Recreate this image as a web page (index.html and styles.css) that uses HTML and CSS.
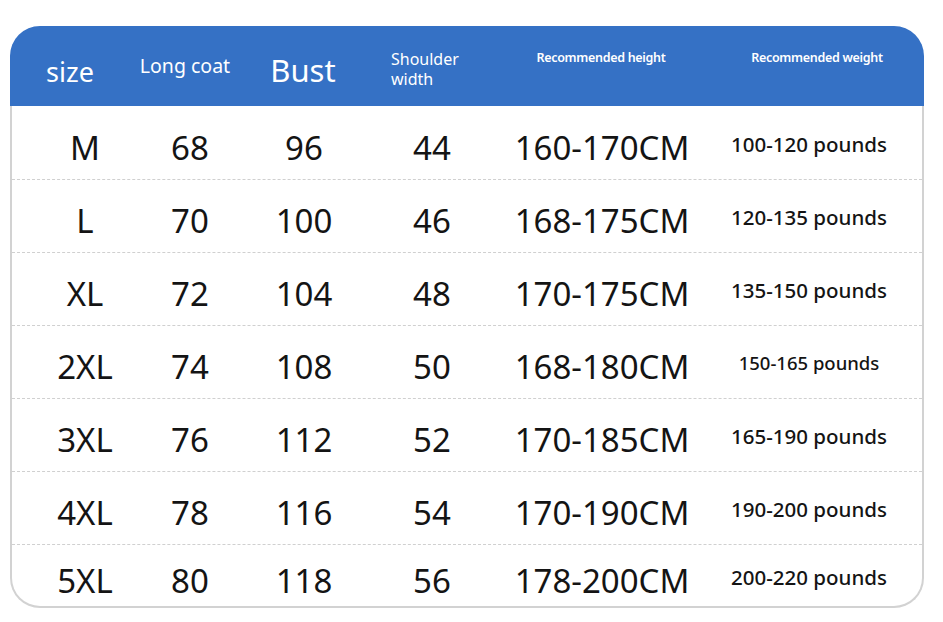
FILE: index.html
```html
<!DOCTYPE html>
<html>
<head>
<meta charset="utf-8">
<link rel="stylesheet" href="styles.css">
</head>
<body>
<div class="card">
  <div class="head">
    <div class="h h-size">size</div>
    <div class="h h-coat">Long coat</div>
    <div class="h h-bust">Bust</div>
    <div class="h h-shoulder">Shoulder<br>width</div>
    <div class="h h-rec">Recommended height</div>
    <div class="h h-rec">Recommended weight</div>
  </div>
  <div class="body">
    <div class="row first"><div class="c big">M</div><div class="c big">68</div><div class="c big">96</div><div class="c big">44</div><div class="c big">160-170CM</div><div class="c w">100-120 pounds</div></div>
    <div class="row"><div class="c big">L</div><div class="c big">70</div><div class="c big">100</div><div class="c big">46</div><div class="c big">168-175CM</div><div class="c w">120-135 pounds</div></div>
    <div class="row"><div class="c big">XL</div><div class="c big">72</div><div class="c big">104</div><div class="c big">48</div><div class="c big">170-175CM</div><div class="c w">135-150 pounds</div></div>
    <div class="row"><div class="c big">2XL</div><div class="c big">74</div><div class="c big">108</div><div class="c big">50</div><div class="c big">168-180CM</div><div class="c w sm">150-165 pounds</div></div>
    <div class="row"><div class="c big">3XL</div><div class="c big">76</div><div class="c big">112</div><div class="c big">52</div><div class="c big">170-185CM</div><div class="c w">165-190 pounds</div></div>
    <div class="row"><div class="c big">4XL</div><div class="c big">78</div><div class="c big">116</div><div class="c big">54</div><div class="c big">170-190CM</div><div class="c w">190-200 pounds</div></div>
    <div class="row last"><div class="c big">5XL</div><div class="c big">80</div><div class="c big">118</div><div class="c big">56</div><div class="c big">178-200CM</div><div class="c w">200-220 pounds</div></div>
  </div>
</div>
</body>
</html>
```
FILE: styles.css
```css
html, body {
  margin: 0;
  padding: 0;
  background: #ffffff;
}
body {
  font-family: "Noto Sans", "Open Sans", sans-serif;
  color: #141414;
}
.card {
  margin: 26px 0 0 10px;
  width: 914px;
}
.head {
  height: 80px;
  background: #3571c5;
  border-radius: 30px 30px 0 0;
  display: grid;
  grid-template-columns: 120px 110px 126px 120px 230px 202px;
  color: #ffffff;
}
.h {
  display: flex;
  justify-content: center;
  align-items: center;
  white-space: nowrap;
}
.h-size {
  font-size: 27px;
  padding-top: 10px;
}
.h-coat {
  font-size: 19.5px;
  padding-bottom: 2px;
}
.h-bust {
  font-size: 31px;
  padding-top: 8px;
}
.h-shoulder {
  justify-content: flex-start;
  padding-left: 25px;
  padding-top: 6px;
  font-size: 16px;
  line-height: 20px;
}
.h-rec {
  align-items: flex-start;
  padding-top: 23px;
  font-size: 12.5px;
  font-weight: 600;
  letter-spacing: -0.3px;
}
.body {
  border: 2px solid #d2d2d2;
  border-top: none;
  border-radius: 0 0 30px 30px;
}
.row {
  display: grid;
  grid-template-columns: 146px 64px 164px 92px 248px 166px;
  height: 72px;
  border-bottom: 1px dashed #d0d0d0;
}
.row.first {
  height: 73px;
}
.row.last {
  height: 61px;
  border-bottom: none;
}
.c {
  display: flex;
  justify-content: center;
  align-items: center;
  white-space: nowrap;
}
.big {
  font-size: 33px;
  padding-top: 9px;
}
.w {
  font-size: 20.5px;
  font-weight: 500;
  padding-top: 2px;
}
.w.sm {
  font-size: 18.5px;
  padding-top: 0;
}
```
